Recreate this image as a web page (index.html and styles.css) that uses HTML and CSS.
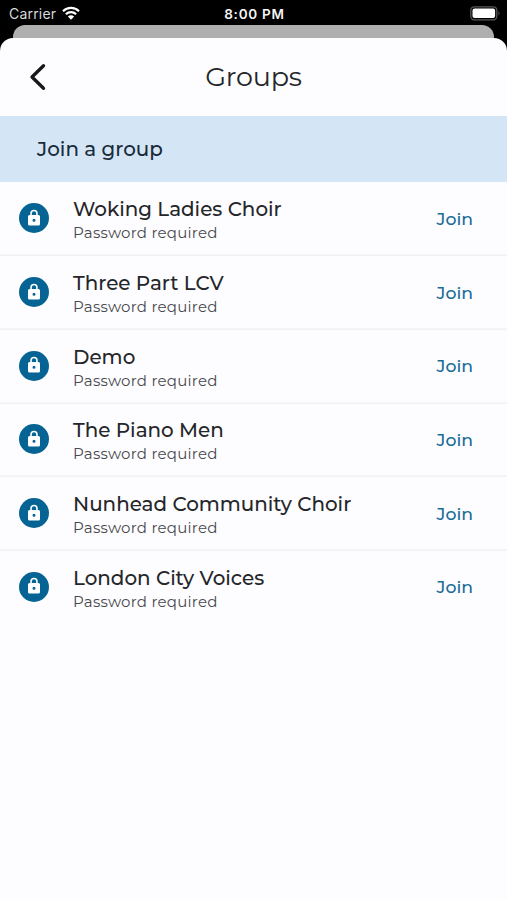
FILE: index.html
```html
<!doctype html>
<html lang="en">
<head>
    <meta charset="utf-8" />
    <title>Groups</title>
    <link rel="stylesheet" href="styles.css">
</head>
<body>
    <svg width="0" height="0" class="defs">
        <symbol id="lock" viewBox="0 0 24 24">
            <path fill-rule="evenodd" d="M18 8h-1V6A5 5 0 0 0 7 6v2H6a2 2 0 0 0-2 2v10a2 2 0 0 0 2 2h12a2 2 0 0 0 2-2V10a2 2 0 0 0-2-2zM12 17a2 2 0 1 1 0-4 2 2 0 0 1 0 4zM14.900 8H9.100V6a2.900 2.900 0 0 1 5.800 0z"/>
        </symbol>
    </svg>
    <div class="status">
        <div class="carrier">
            <span>Carrier</span>
            <svg class="wifi" width="18" height="14" viewBox="0 0 18 14">
                <path d="M1 5.200a11.300 11.300 0 0 1 16 0M3.900 8.200a7.200 7.200 0 0 1 10.200 0" fill="none" stroke="#fff" stroke-width="2.200"/>
                <path d="M9 13.700L5.900 10.500a4.400 4.400 0 0 1 6.200 0z" fill="#fff"/>
            </svg>
        </div>
        <div class="time">8:00 PM</div>
        <svg class="battery" width="31" height="15" viewBox="0 0 31 15">
            <rect x=".8" y=".8" width="26" height="13" rx="3.500" fill="none" stroke="#58585a" stroke-width="1.300"/>
            <rect x="2.500" y="2.500" width="22.600" height="9.600" rx="2" fill="#fff"/>
            <path d="M28.500 5q2 2.300 0 4.600z" fill="#58585a"/>
        </svg>
    </div>
    <div class="behind"></div>
    <div class="sheet">
        <div class="header">
            <svg class="back" width="18" height="28" viewBox="0 0 18 28">
                <path d="M15.500 2.700L4 14l11.500 11.300" fill="none" stroke="#17181b" stroke-width="3.300" stroke-linecap="round" stroke-linejoin="round"/>
            </svg>
            <h1>Groups</h1>
        </div>
        <h2>Join a group</h2>
        <ul class="list">
            <li>
                <span class="icon"><svg><use href="#lock"/></svg></span>
                <div class="info"><strong>Woking Ladies Choir</strong><small>Password required</small></div>
                <a class="join">Join</a>
            </li>
            <li>
                <span class="icon"><svg><use href="#lock"/></svg></span>
                <div class="info"><strong>Three Part LCV</strong><small>Password required</small></div>
                <a class="join">Join</a>
            </li>
            <li>
                <span class="icon"><svg><use href="#lock"/></svg></span>
                <div class="info"><strong>Demo</strong><small>Password required</small></div>
                <a class="join">Join</a>
            </li>
            <li>
                <span class="icon"><svg><use href="#lock"/></svg></span>
                <div class="info"><strong>The Piano Men</strong><small>Password required</small></div>
                <a class="join">Join</a>
            </li>
            <li>
                <span class="icon"><svg><use href="#lock"/></svg></span>
                <div class="info"><strong>Nunhead Community Choir</strong><small>Password required</small></div>
                <a class="join">Join</a>
            </li>
            <li>
                <span class="icon"><svg><use href="#lock"/></svg></span>
                <div class="info"><strong>London City Voices</strong><small>Password required</small></div>
                <a class="join">Join</a>
            </li>
        </ul>
    </div>
</body>
</html>
```
FILE: styles.css
```css
*{
    box-sizing:border-box;
}
body{
    margin:0;
    height:900px;
    overflow:hidden;
    background:#000;
    color:#25262a;
    font-family:Montserrat, Inter, "Liberation Sans", sans-serif;
    display:flex;
    flex-direction:column;
}
.defs{
    display:none;
}
.status{
    flex:none;
    height:25px;
    padding:2px 7px 0 9px;
    display:grid;
    grid-template-columns:1fr auto 1fr;
    align-items:center;
    color:#f4f4f4;
    font:14px/20px Inter, sans-serif;
}
.carrier{
    display:flex;
    align-items:center;
    gap:6px;
    color:#d8d8d8;
    letter-spacing:.2px;
}
.wifi{
    margin-top:-2px;
}
.time{
    font-weight:600;
    font-size:13.5px;
    letter-spacing:.75px;
}
.battery{
    justify-self:end;
    margin:-1px -1px 0 0;
}
.behind{
    flex:none;
    height:28px;
    margin:0 13px -15px;
    border-radius:12px 12px 0 0;
    background:#afafaf;
}
.sheet{
    flex:1;
    border-radius:13px 13px 0 0;
    background:#fdfdff;
}
.header{
    height:77.500px;
    padding:0 28px;
    display:grid;
    grid-template-columns:30px 1fr 30px;
    align-items:center;
}
.back{
    display:block;
}
h1{
    margin:0;
    text-align:center;
    font-size:27px;
    font-weight:400;
    letter-spacing:-.2px;
}
h2{
    margin:0;
    height:66px;
    padding-left:37px;
    line-height:67px;
    background:#d4e6f5;
    color:#1a2b3b;
    font-size:19.900px;
    font-weight:500;
}
.list{
    margin:0;
    padding:0;
    list-style:none;
}
.list li{
    height:73.700px;
    padding:0 34px 0 19px;
    display:flex;
    align-items:center;
    box-shadow:0 1px 0 #f1f2f4, inset 0 -1px 0 #f6f6f8;
}
.list li:last-child{
    box-shadow:none;
}
.icon{
    flex:none;
    width:30px;
    height:30px;
    margin-right:24px;
    display:flex;
    align-items:center;
    justify-content:center;
    border-radius:50%;
    background:#056493;
}
.icon svg{
    width:18px;
    height:18px;
    margin-top:-1px;
    fill:#fff;
}
.info{
    flex:1;
    padding-top:5.500px;
    display:flex;
    flex-direction:column;
}
.info strong{
    line-height:25px;
    font-size:19.900px;
    font-weight:500;
}
.info small{
    line-height:22.500px;
    font-size:15px;
    letter-spacing:.25px;
    color:#48494d;
}
.join{
    font-size:17.300px;
    font-weight:500;
    color:#1a6c97;
}
```
